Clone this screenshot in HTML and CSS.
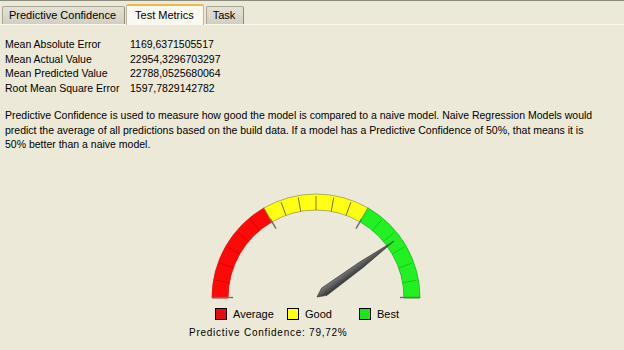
FILE: index.html
```html
<!DOCTYPE html>
<html lang="en">
<head>
    <meta charset="UTF-8">
    <title>Test Metrics</title>
    <link rel="stylesheet" href="styles.css">
</head>
<body>
    <div class="tabs">
        <div class="tab">Predictive Confidence</div>
        <div class="tab active">Test Metrics</div>
        <div class="tab">Task</div>
    </div>

    <div class="content">
        <div class="metrics">
            <span>Mean Absolute Error</span><span>1169,6371505517</span>
            <span>Mean Actual Value</span><span>22954,3296703297</span>
            <span>Mean Predicted Value</span><span>22788,0525680064</span>
            <span>Root Mean Square Error</span><span>1597,7829142782</span>
        </div>

        <p class="note">Predictive Confidence is used to measure how good the model is compared to a naive model. Naive Regression Models would predict the average of all predictions based on the build data. If a model has a Predictive Confidence of 50%, that means it is 50% better than a naive model.</p>

        <div class="gauge">
            <svg class="dial" width="240" height="112" viewBox="0 0 240 112">
                <defs>
                    <linearGradient id="needle-shade" x1="0" y1="0" x2="0" y2="1">
                        <stop offset="0" stop-color="#7c7c7c"/>
                        <stop offset="0.45" stop-color="#5c5c5c"/>
                        <stop offset="1" stop-color="#343434"/>
                    </linearGradient>
                </defs>
                <!-- bands -->
                <path d="M23 109 A104 104 0 0 1 75 18.93 L83 32.79 A88 88 0 0 0 39 109 Z" fill="#ff0808" stroke="#d81010" stroke-width="0.8"/>
                <path d="M75 18.93 A104 104 0 0 1 179 18.93 L171 32.79 A88 88 0 0 0 83 32.79 Z" fill="#ffff14" stroke="#9aa040" stroke-width="0.8"/>
                <path d="M179 18.93 A104 104 0 0 1 231 109 L215 109 A88 88 0 0 0 171 32.79 Z" fill="#22f022" stroke="#18b818" stroke-width="0.8"/>

                <!-- minor ticks -->
                <g stroke="#d80000" stroke-width="0.8">
                    <line x1="215" y1="109" x2="229" y2="109" transform="rotate(-130 127 109)"/>
                    <line x1="215" y1="109" x2="229" y2="109" transform="rotate(-140 127 109)"/>
                    <line x1="215" y1="109" x2="229" y2="109" transform="rotate(-150 127 109)"/>
                    <line x1="215" y1="109" x2="229" y2="109" transform="rotate(-160 127 109)"/>
                    <line x1="215" y1="109" x2="229" y2="109" transform="rotate(-170 127 109)"/>
                </g>
                <g stroke="#5a5a20" stroke-width="0.8">
                    <line x1="215" y1="109" x2="229" y2="109" transform="rotate(-70 127 109)"/>
                    <line x1="215" y1="109" x2="229" y2="109" transform="rotate(-80 127 109)"/>
                    <line x1="215" y1="109" x2="229" y2="109" transform="rotate(-90 127 109)"/>
                    <line x1="215" y1="109" x2="229" y2="109" transform="rotate(-100 127 109)"/>
                    <line x1="215" y1="109" x2="229" y2="109" transform="rotate(-110 127 109)"/>
                </g>
                <g stroke="#14c014" stroke-width="0.8">
                    <line x1="215" y1="109" x2="229" y2="109" transform="rotate(-10 127 109)"/>
                    <line x1="215" y1="109" x2="229" y2="109" transform="rotate(-20 127 109)"/>
                    <line x1="215" y1="109" x2="229" y2="109" transform="rotate(-30 127 109)"/>
                    <line x1="215" y1="109" x2="229" y2="109" transform="rotate(-40 127 109)"/>
                    <line x1="215" y1="109" x2="229" y2="109" transform="rotate(-50 127 109)"/>
                </g>

                <!-- zone limits -->
                <g stroke="#6e6e62" stroke-width="1.4">
                    <line x1="207" y1="109" x2="218" y2="109" transform="rotate(-60 127 109)"/>
                    <line x1="207" y1="109" x2="218" y2="109" transform="rotate(-120 127 109)"/>
                    <line x1="23" y1="108.5" x2="44" y2="108.5"/>
                    <line x1="211" y1="108.5" x2="231" y2="108.5"/>
                </g>

                <!-- needle -->
                <g transform="translate(128 108) rotate(-36)">
                    <polygon points="0,0 9,-4.5 55,-3.2 95,0 55,3.2 9,4.5" fill="url(#needle-shade)" stroke="#333" stroke-width="0.6"/>
                </g>
            </svg>

            <div class="legend">
                <span class="item"><i class="swatch red"></i>Average</span>
                <span class="item"><i class="swatch yellow"></i>Good</span>
                <span class="item"><i class="swatch green"></i>Best</span>
            </div>
            <div class="caption">Predictive Confidence: 79,72%</div>
        </div>
    </div>
</body>
</html>
```

FILE: styles.css
```css
* {
    box-sizing: border-box;
    margin: 0;
    padding: 0;
}

body {
    background: #ece9d8;
    color: #000;
    font-family: 'Liberation Sans', Arial, sans-serif;
    font-size: 10.5px;
    width: 624px;
    height: 350px;
    overflow: hidden;
}

.tabs {
    display: flex;
    align-items: flex-end;
    height: 25px;
    padding-left: 2px;
    border-top: 1px solid #8c8c7e;
    border-bottom: 1px solid #fbf9ee;
    font-size: 11px;
}

.tab {
    height: 18px;
    line-height: 17px;
    padding: 0 8px 0 6px;
    margin-right: 1px;
    background: linear-gradient(#e4e1d5, #d2cfc2);
    border: 1px solid #a9a696;
    border-bottom: none;
    border-right-color: #8e8b7c;
    border-radius: 2px 2px 0 0;
}

.tab.active {
    height: 21px;
    line-height: 19px;
    padding: 0 9px 0 8px;
    background: #fbf9ef;
    border-color: #b9b5a2;
    border-top: 2px solid #eab94f;
    margin-right: 2px;
    position: relative;
    top: 1px;
}

.content {
    padding: 12px 0 0 5px;
}

.metrics {
    display: grid;
    grid-template-columns: 125px auto;
    line-height: 14.5px;
}

.note {
    width: 596px;
    margin-top: 13px;
    line-height: 14.5px;
}

.gauge {
    margin: 37px 0 0 184px;
    width: 260px;
}

.dial {
    display: block;
}

.legend {
    display: flex;
    margin: 7px 0 0 26px;
    height: 12px;
    font-size: 11px;
}

.item {
    display: flex;
    align-items: center;
    gap: 6px;
    width: 72px;
    line-height: 12px;
}

.swatch {
    width: 12px;
    height: 12px;
    border: 1px solid #000;
}

.red { background: #e21010; }
.yellow { background: #ffff20; }
.green { background: #22e022; }

.caption {
    margin-top: 7px;
    font-size: 10px;
    letter-spacing: 0.75px;
}
```
